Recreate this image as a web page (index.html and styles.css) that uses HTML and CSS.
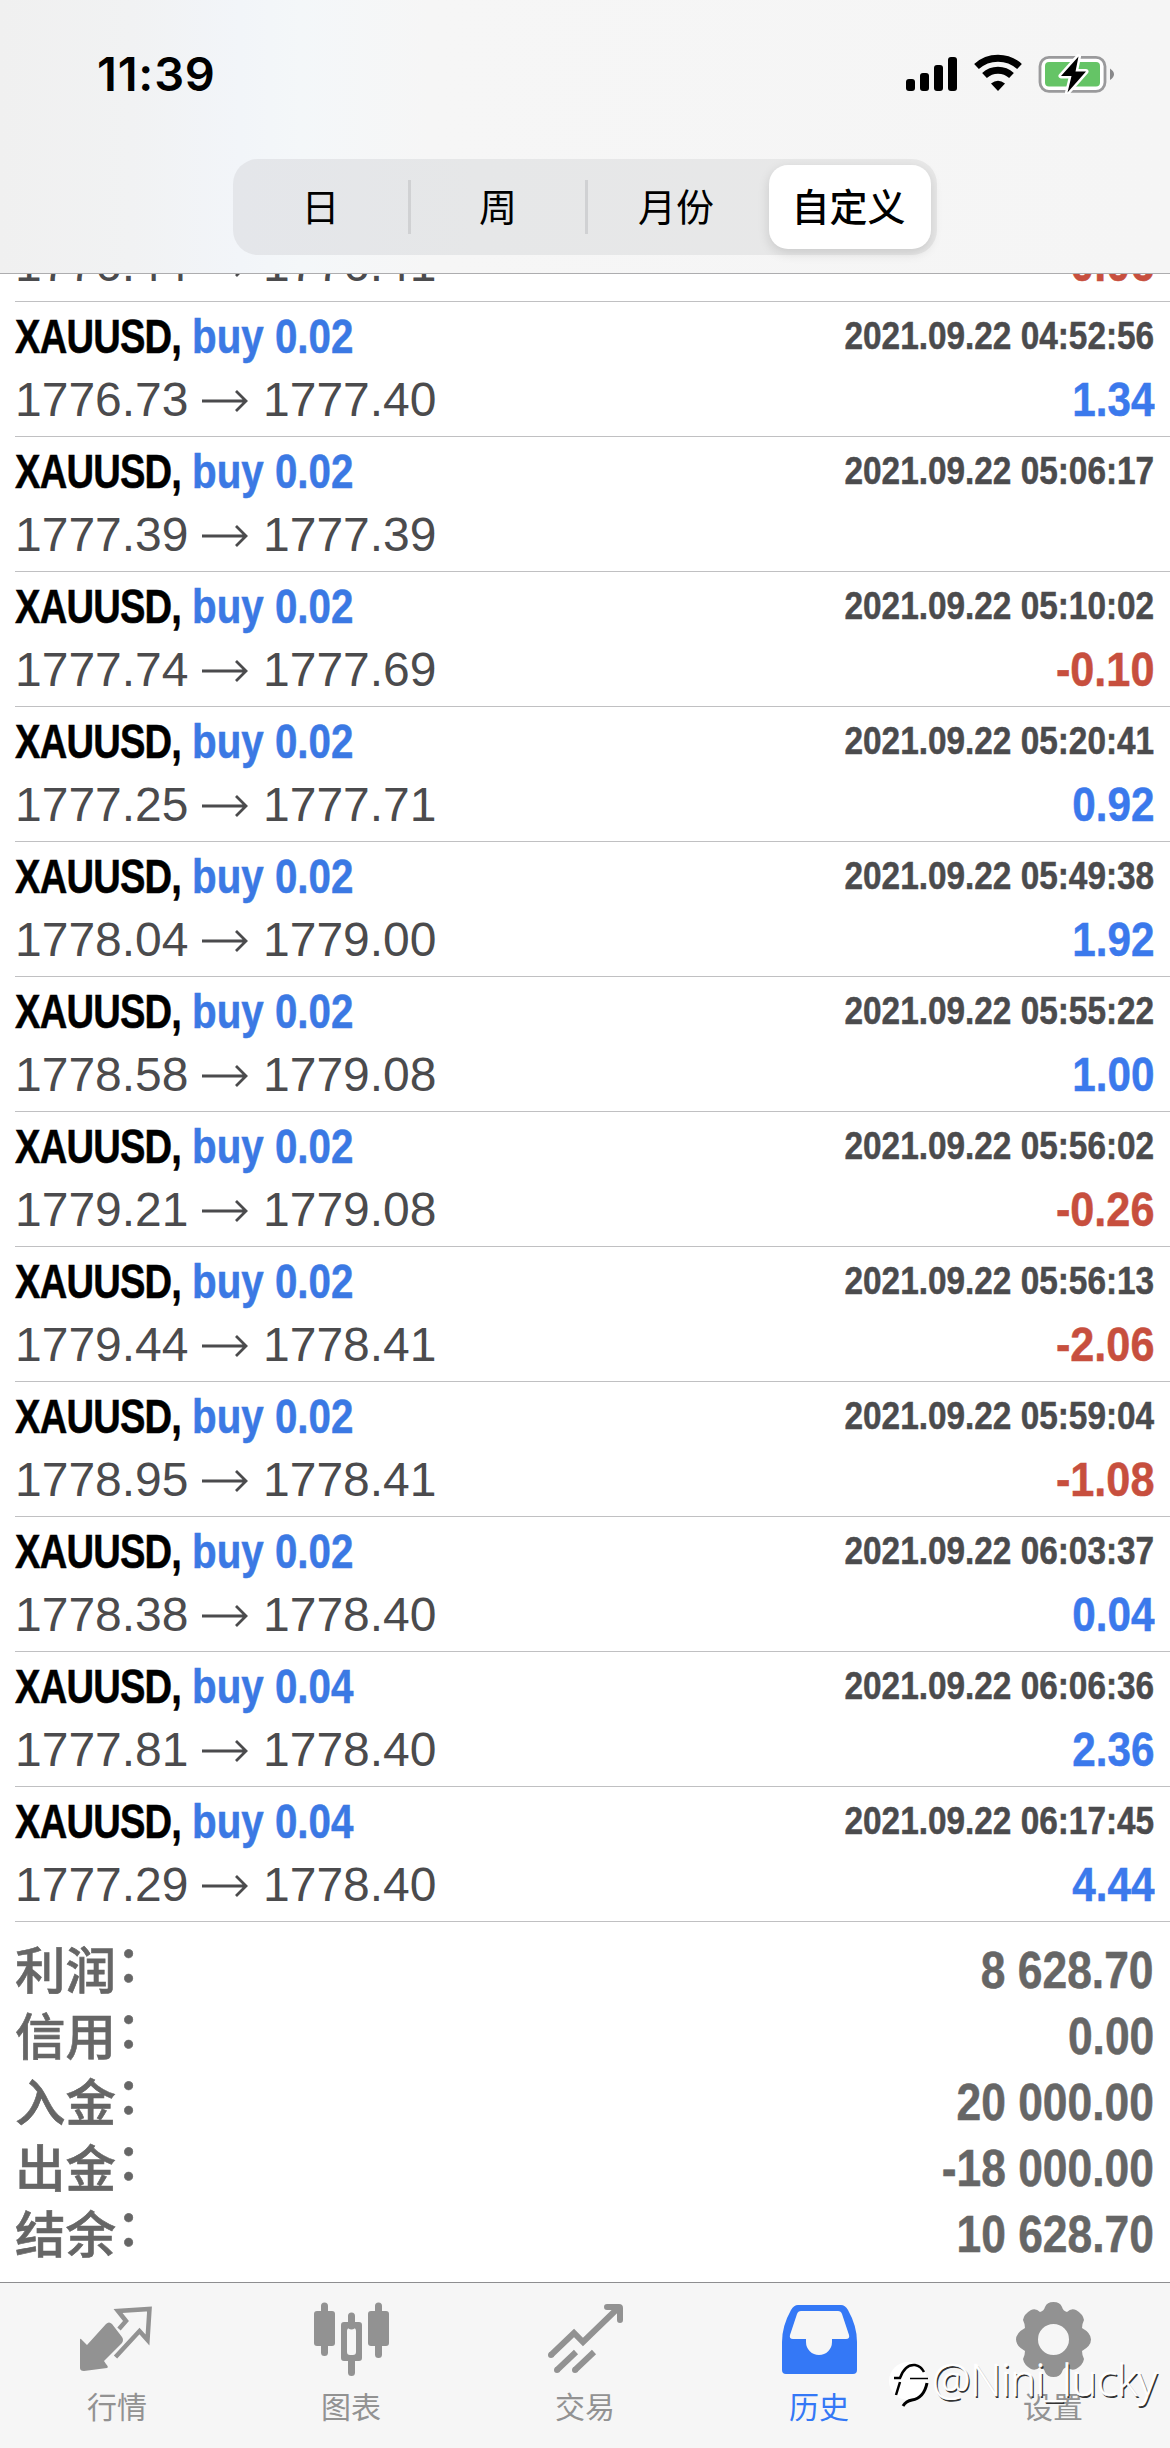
FILE: index.html
```
<!DOCTYPE html>
<html lang="zh-CN"><head><meta charset="utf-8"><title>历史</title><link rel="stylesheet" href="styles.css"></head>
<body>
<div class="app">
<header class="top">
  <div class="status">
    <span class="time">11:39</span>
    <svg class="status-icons" width="210" height="40" viewBox="0 0 210 40">
      <g><rect x="2" y="25" width="9" height="12" rx="3"/><rect x="16" y="19" width="9" height="18" rx="3"/><rect x="30" y="11" width="9" height="26" rx="3"/><rect x="44" y="3" width="9" height="34" rx="3"/></g>
      <g fill="none" stroke="#000" stroke-width="7"><path d="M72.500 12.500A32 32 0 0 1 115.500 12.500"/><path d="M80.500 21.500A20 20 0 0 1 107.500 21.500"/></g>
      <path d="M94 37L87 29.500Q94 24 101 29.500Z"/>
      <rect x="136" y="3.300" width="65" height="34" rx="9" fill="#fff" stroke="#9a9a9c" stroke-width="2.800"/>
      <rect x="141" y="8" width="55" height="24.500" rx="4" fill="#65c466"/>
      <path d="M206 14.500Q214 20 206 26Z" fill="#88888a"/>
      <path class="bolt" d="M174.500 2.500L157 22H167.500L163.500 38.500L182 17.500H171.500Z"/>
    </svg>
  </div>
  <div class="segments"><span>日</span><span>周</span><span>月份</span><b>自定义</b></div>
</header>
<main class="deals">
<section class="deal clipped"><div class="line2"><span class="price">1776.44</span><svg class="arrow" viewBox="0 0 46 24"><path d="M0 12H44M34 2L44 12L34 22"/></svg><span class="price">1776.41</span><span class="value loss">-0.06</span></div></section>
<section class="deal"><div class="line1"><span class="symbol">XAUUSD,</span><span class="side">buy 0.02</span><time>2021.09.22 04:52:56</time></div><div class="line2"><span class="price">1776.73</span><svg class="arrow" viewBox="0 0 46 24"><path d="M0 12H44M34 2L44 12L34 22"/></svg><span class="price">1777.40</span><span class="value">1.34</span></div></section>
<section class="deal"><div class="line1"><span class="symbol">XAUUSD,</span><span class="side">buy 0.02</span><time>2021.09.22 05:06:17</time></div><div class="line2"><span class="price">1777.39</span><svg class="arrow" viewBox="0 0 46 24"><path d="M0 12H44M34 2L44 12L34 22"/></svg><span class="price">1777.39</span></div></section>
<section class="deal"><div class="line1"><span class="symbol">XAUUSD,</span><span class="side">buy 0.02</span><time>2021.09.22 05:10:02</time></div><div class="line2"><span class="price">1777.74</span><svg class="arrow" viewBox="0 0 46 24"><path d="M0 12H44M34 2L44 12L34 22"/></svg><span class="price">1777.69</span><span class="value loss">-0.10</span></div></section>
<section class="deal"><div class="line1"><span class="symbol">XAUUSD,</span><span class="side">buy 0.02</span><time>2021.09.22 05:20:41</time></div><div class="line2"><span class="price">1777.25</span><svg class="arrow" viewBox="0 0 46 24"><path d="M0 12H44M34 2L44 12L34 22"/></svg><span class="price">1777.71</span><span class="value">0.92</span></div></section>
<section class="deal"><div class="line1"><span class="symbol">XAUUSD,</span><span class="side">buy 0.02</span><time>2021.09.22 05:49:38</time></div><div class="line2"><span class="price">1778.04</span><svg class="arrow" viewBox="0 0 46 24"><path d="M0 12H44M34 2L44 12L34 22"/></svg><span class="price">1779.00</span><span class="value">1.92</span></div></section>
<section class="deal"><div class="line1"><span class="symbol">XAUUSD,</span><span class="side">buy 0.02</span><time>2021.09.22 05:55:22</time></div><div class="line2"><span class="price">1778.58</span><svg class="arrow" viewBox="0 0 46 24"><path d="M0 12H44M34 2L44 12L34 22"/></svg><span class="price">1779.08</span><span class="value">1.00</span></div></section>
<section class="deal"><div class="line1"><span class="symbol">XAUUSD,</span><span class="side">buy 0.02</span><time>2021.09.22 05:56:02</time></div><div class="line2"><span class="price">1779.21</span><svg class="arrow" viewBox="0 0 46 24"><path d="M0 12H44M34 2L44 12L34 22"/></svg><span class="price">1779.08</span><span class="value loss">-0.26</span></div></section>
<section class="deal"><div class="line1"><span class="symbol">XAUUSD,</span><span class="side">buy 0.02</span><time>2021.09.22 05:56:13</time></div><div class="line2"><span class="price">1779.44</span><svg class="arrow" viewBox="0 0 46 24"><path d="M0 12H44M34 2L44 12L34 22"/></svg><span class="price">1778.41</span><span class="value loss">-2.06</span></div></section>
<section class="deal"><div class="line1"><span class="symbol">XAUUSD,</span><span class="side">buy 0.02</span><time>2021.09.22 05:59:04</time></div><div class="line2"><span class="price">1778.95</span><svg class="arrow" viewBox="0 0 46 24"><path d="M0 12H44M34 2L44 12L34 22"/></svg><span class="price">1778.41</span><span class="value loss">-1.08</span></div></section>
<section class="deal"><div class="line1"><span class="symbol">XAUUSD,</span><span class="side">buy 0.02</span><time>2021.09.22 06:03:37</time></div><div class="line2"><span class="price">1778.38</span><svg class="arrow" viewBox="0 0 46 24"><path d="M0 12H44M34 2L44 12L34 22"/></svg><span class="price">1778.40</span><span class="value">0.04</span></div></section>
<section class="deal"><div class="line1"><span class="symbol">XAUUSD,</span><span class="side">buy 0.04</span><time>2021.09.22 06:06:36</time></div><div class="line2"><span class="price">1777.81</span><svg class="arrow" viewBox="0 0 46 24"><path d="M0 12H44M34 2L44 12L34 22"/></svg><span class="price">1778.40</span><span class="value">2.36</span></div></section>
<section class="deal"><div class="line1"><span class="symbol">XAUUSD,</span><span class="side">buy 0.04</span><time>2021.09.22 06:17:45</time></div><div class="line2"><span class="price">1777.29</span><svg class="arrow" viewBox="0 0 46 24"><path d="M0 12H44M34 2L44 12L34 22"/></svg><span class="price">1778.40</span><span class="value">4.44</span></div></section>
<dl class="totals">
<div><dt>利润<i>：</i></dt><dd>8 628.70</dd></div>
<div><dt>信用<i>：</i></dt><dd>0.00</dd></div>
<div><dt>入金<i>：</i></dt><dd>20 000.00</dd></div>
<div><dt>出金<i>：</i></dt><dd>-18 000.00</dd></div>
<div><dt>结余<i>：</i></dt><dd>10 628.70</dd></div>
</dl>
</main>
<nav class="tabs">
<a><svg viewBox="0 0 75 75"><path d="M32 22Q29 19 26 22L7 43L1 37Q0 36 0 38V66Q0 69 4 69L27 66Q29 65 26 62L24 59L42 41Q44 38 42 35Z"/><path class="s" d="M39 27L46 19L38 9L69.500 7L67.500 38L59.500 29L35.500 55" style="stroke-width:4.500"/></svg>行情</a>
<a><svg viewBox="0 0 75 75"><path class="s" stroke-width="7" stroke-linecap="round" d="M10.500 4V50.500M37.500 14V24M37.500 58V70.500M64.500 4V52.500"/><rect y="9" width="21" height="35" rx="3"/><rect x="54" y="9" width="21" height="35" rx="3"/><path fill-rule="evenodd" d="M30 20H45Q48 20 48 23V56Q48 59 45 59H30Q27 59 27 56V23Q27 20 30 20ZM33 29V50Q33 53 36 53H39Q42 53 42 50V29Q42 26 39 26H36Q33 26 33 29Z"/></svg>图表</a>
<a><svg viewBox="0 0 75 75"><path class="s" stroke-width="6" d="M3 53L26 31L35 40L68 8M9 68L28 50M27 68L46 50"/><circle cx="3" cy="53" r="3"/><circle cx="9" cy="68" r="3"/><circle cx="27" cy="68" r="3"/><path d="M59 2H71Q75 2 75 6V18A3 3 0 0 1 69 18V11L66 8H59A3 3 0 0 1 59 2Z"/></svg>交易</a>
<a class="active"><svg viewBox="0 0 75 75"><path fill-rule="evenodd" d="M16 3H59Q63 3 66 8Q75 24 75 40V68Q75 72 71 72H4Q0 72 0 68V40Q0 24 9 8Q12 3 16 3ZM19 9Q16 9 15 12L8 33Q7 37 11 37H24V40A13 13 0 0 0 50 40V37H64Q68 37 67 33L60 12Q59 9 56 9Z"/></svg>历史</a>
<a><svg viewBox="0 0 75 75"><path fill-rule="evenodd" d="M37.500 0Q44 0 46 5Q47 9 51 10Q55 6 60 8Q67 12 68 18Q66 22 66 26Q75 31 75 37.500Q75 44 66 49Q66 53 68 57Q67 63 60 67Q55 69 51 65Q47 66 46 70Q44 75 37.500 75Q31 75 29 70Q28 66 24 65Q20 69 15 67Q8 63 7 57Q9 53 9 49Q0 44 0 37.500Q0 31 9 26Q9 22 7 18Q8 12 15 8Q20 6 24 10Q28 9 29 5Q31 0 37.500 0ZM37.500 22A15.500 15.500 0 1 0 37.500 53A15.500 15.500 0 1 0 37.500 22Z"/></svg>设置</a>
</nav>
<div class="watermark"><svg viewBox="0 0 44 50"><circle cx="20" cy="21" r="19" fill="#fff"/><g fill="none" stroke="#000"><path stroke-width="2.500" d="M6 18H12Q17 4 27 5Q33 6 36 12M12 22L8 35"/><path stroke-width="1.500" d="M22 18.500H40"/><path stroke-width="3" d="M39 23Q36 38 24 40Q18 41 15 46"/></g></svg><span>@Nini_lucky</span></div>
</div>
</body></html>
```
FILE: styles.css
```
*{box-sizing:border-box}
body{margin:0;background:#fff;font-family:"Liberation Sans","Noto Sans CJK SC",sans-serif}
.app{position:relative;width:1170px;height:2448px;display:flex;flex-direction:column;overflow:hidden}
.top{height:274px;flex:none;border-bottom:1px solid #adadaf;background:linear-gradient(90deg,#f0f0f0 0,#f1f2f3 130px,#f2f5f9 240px,#f4f7f9 300px,#f6f6f6 430px,#f5f5f5 100%)}
.status{height:159px;padding:54px 56px 0 97px;display:flex;justify-content:space-between;align-items:flex-start}
.time{font:600 47px/40px Inter,sans-serif;letter-spacing:.8px}
.status-icons{display:block}
.bolt{stroke:#fff;stroke-width:5;paint-order:stroke;stroke-linejoin:round}
.segments{width:704px;height:96px;margin-left:233px;border-radius:25px;background:linear-gradient(90deg,#e4e6ea,#e6e7e8 35%,#e8e8e8);display:grid;grid-template-columns:175px 177px 179px 173px;align-items:center;text-align:center;font:400 38px/54px "Noto Sans CJK SC",sans-serif}
.segments span{height:54px;line-height:50px}
.segments span+span{border-left:3px solid #d0d1d3}
.segments b{width:162px;height:84px;margin-left:5px;padding-right:3px;border-radius:19px;background:#fff;font-weight:500;line-height:80px;box-shadow:0 4px 12px #0002}
.deals{flex:1;overflow:hidden;padding-left:15px}
.deal{height:135px;border-bottom:1px solid #c0c0c2;padding-top:11px}
.clipped{height:28px;padding:0;display:flex;align-items:flex-end;overflow:hidden}
.clipped .line2{flex:1;margin-bottom:12px}
.line1,.line2{display:flex;height:48px;line-height:48px;font-size:48px;white-space:nowrap}
.line2{margin-top:15px;color:#4b4b4d}
.symbol,.side,time,.value{font-weight:700;-webkit-text-stroke:.5px}
.symbol{width:177px;letter-spacing:-1px;transform:scaleX(.795);transform-origin:left}
.side{color:#3b79e4;transform:scaleX(.84);transform-origin:left}
time{margin-left:auto;margin-right:16px;font-size:39px;line-height:46px;color:#4b4b4d;transform:scaleX(.855);transform-origin:right}
.price{width:172px}
.arrow{width:46px;height:24px;margin:13px 15px 0 15px;fill:none;stroke:#4b4b4d;stroke-width:2.800}
.value{margin-left:auto;margin-right:16px;color:#3b79ec;transform:scaleX(.88);transform-origin:right}
.loss{color:#c74f3e;transform:scaleX(.9)}
.totals{margin:16px 0 0;color:#666}
.totals div{height:66px;display:flex;justify-content:space-between;line-height:66px}
dt{font:500 50.5px/59px "Noto Sans CJK SC",sans-serif;-webkit-text-stroke:.6px}
dt i{font-style:normal;position:relative;top:-7px}
dd{margin:0 16px 0 0;font-size:51px;font-weight:700;-webkit-text-stroke:.5px;transform:scaleX(.87);transform-origin:right}
.tabs{height:166px;flex:none;border-top:1px solid #8e8e90;background:#f6f6f6;display:grid;grid-template-columns:repeat(5,1fr)}
.tabs a{display:flex;flex-direction:column;align-items:center;padding-top:19px;color:#929292;font:400 30px/44px "Noto Sans CJK SC",sans-serif;gap:6px}
.tabs svg{width:75px;height:75px;fill:currentColor}
.tabs .s{fill:none;stroke:currentColor}
.tabs .active{color:#3478f6}
.watermark{position:absolute;left:888px;top:2360px;display:flex;color:#fff;font:300 43.5px/50px "Open Sans",sans-serif;letter-spacing:-.5px;white-space:nowrap}
.watermark svg{width:44px;height:50px}
.watermark span{margin-top:-5px;-webkit-text-stroke:.5px #fff;text-shadow:1.500px 1.500px 0 #333}
```
